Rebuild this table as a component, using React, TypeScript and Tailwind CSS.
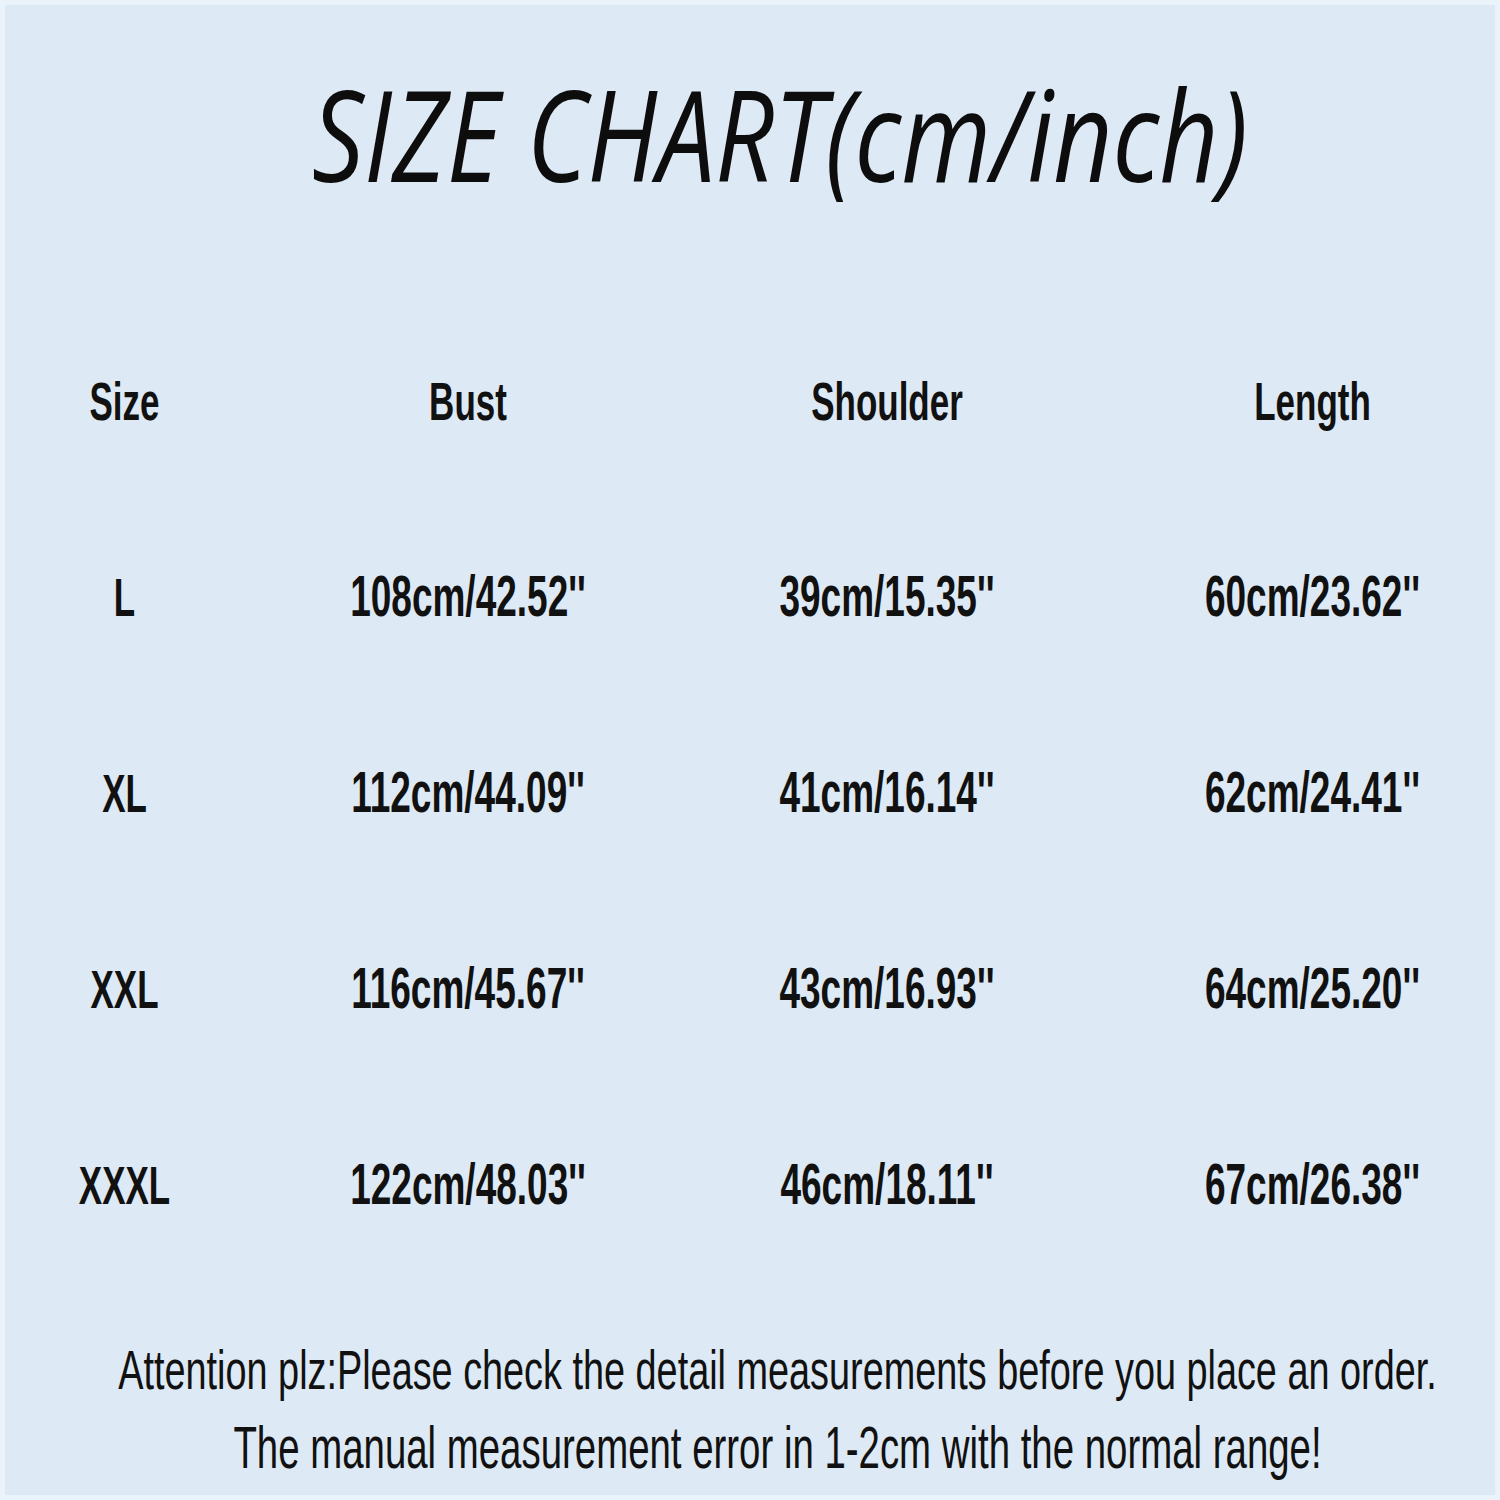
const rows = [
  { size: "L", bust: "108cm/42.52''", shoulder: "39cm/15.35''", length: "60cm/23.62''" },
  { size: "XL", bust: "112cm/44.09''", shoulder: "41cm/16.14''", length: "62cm/24.41''" },
  { size: "XXL", bust: "116cm/45.67''", shoulder: "43cm/16.93''", length: "64cm/25.20''" },
  { size: "XXXL", bust: "122cm/48.03''", shoulder: "46cm/18.11''", length: "67cm/26.38''" },
];

const narrow = "font-['Liberation_Sans_Narrow','Liberation_Sans',sans-serif]";
const cell = "flex items-center justify-center h-[196px]";
const headTxt = `inline-block scale-y-[1.55] font-bold text-[35px] leading-none text-[#111] ${narrow}`;
const valTxt = `inline-block scale-y-[1.55] font-bold text-[37px] leading-none text-[#111] ${narrow}`;

function Row({ cols, head }: { cols: string[]; head?: boolean }) {
  const t = head ? headTxt : valTxt;
  return (
    <>
      <div className={cell}>
        <span className={headTxt}>{cols[0]}</span>
      </div>
      <div className={cell}>
        <span className={t}>{cols[1]}</span>
      </div>
      <div className={cell}>
        <span className={t}>{cols[2]}</span>
      </div>
      <div className={cell + " pl-[48px]"}>
        <span className={t}>{cols[3]}</span>
      </div>
    </>
  );
}

export default function App() {
  return (
    <div className="w-[1500px] h-[1500px] overflow-hidden bg-[#dde9f4] border-[5px] border-[#eaf2fa] flex flex-col">
      <div className="h-[297px] flex items-center justify-center pl-[60px] pb-[41px]">
        <h1 className="inline-block scale-y-[1.23] italic font-normal text-[103px] leading-none text-[#0d0d0d] font-['Open_Sans',sans-serif]">
          SIZE CHART(cm/inch)
        </h1>
      </div>

      <div className="grid grid-cols-[239px_448px_390px_413px]">
        <Row head cols={["Size", "Bust", "Shoulder", "Length"]} />
        {rows.map((r) => (
          <Row key={r.size} cols={[r.size, r.bust, r.shoulder, r.length]} />
        ))}
      </div>

      <div className={`flex flex-col items-center pl-[55px] pt-[70px] text-[#111] whitespace-nowrap ${narrow}`}>
        <p className="inline-block scale-y-[1.475] text-[37.85px] leading-none">
          Attention plz:Please check the detail measurements before you place an order.
        </p>
        <p className="inline-block scale-y-[1.56] text-[38.4px] leading-none mt-[39px]">
          The manual measurement error in 1-2cm with the normal range!
        </p>
      </div>
    </div>
  );
}
